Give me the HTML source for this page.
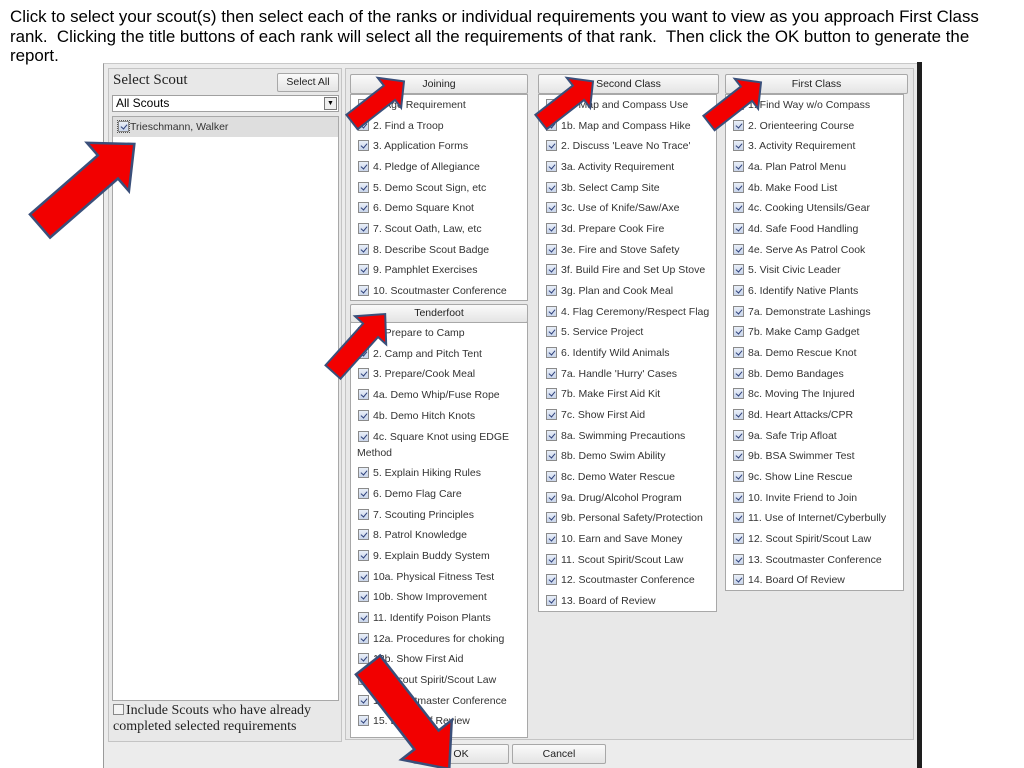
<!DOCTYPE html>
<html><head><meta charset="utf-8"><style>
*{margin:0;padding:0;box-sizing:border-box}
body{width:1024px;height:768px;background:#fff;position:relative;overflow:hidden;font-family:"Liberation Sans",Arial,sans-serif}
.intro{position:absolute;left:10px;top:7px;width:995px;font-size:16.9px;line-height:19.7px;color:#000}
.win{position:absolute;left:103px;top:63px;width:815px;height:705px;background:#ececec;border-left:1px solid #9a9a9a;border-top:1px solid #c8c8c8}
.rbar{position:absolute;left:917px;top:62px;width:5px;height:706px;background:#1e1e1e}
.lp{position:absolute;left:108px;top:68px;width:234px;height:674px;border:1px solid #c4c4c4;background:#e8e8e8}
.rp{position:absolute;left:345px;top:68px;width:569px;height:672px;border:1px solid #c4c4c4;background:#e8e8e8}
.btn{position:absolute;border:1px solid #a8a8a8;border-radius:2px;background:linear-gradient(#fafafa,#e4e4e4);font-size:10.5px;text-align:center;color:#222}
.list{position:absolute;background:#fff;border:1px solid #a8a8a8}
.row{height:20.68px;line-height:20.68px;font-size:10.5px;color:#333;padding-left:7px;white-space:nowrap}
.row.w{height:37px;line-height:16px;padding-top:3px;white-space:normal;padding-left:6px}
.cb{display:inline-block;width:11px;height:11px;border:1px solid #8a8a8a;background:linear-gradient(#e8eef8,#c9d5ea);vertical-align:-2px;margin-right:4px;position:relative}
.cb:after{content:"";position:absolute;left:3px;top:1px;width:3px;height:5px;border-right:1.5px solid #2c3f7a;border-bottom:1.5px solid #2c3f7a;transform:rotate(40deg)}
.serif{font-family:"Liberation Serif",serif}
</style></head><body>
<div class="intro">Click to select your scout(s) then select each of the ranks or individual requirements you want to view as you approach First Class rank.&nbsp; Clicking the title buttons of each rank will select all the requirements of that rank.&nbsp; Then click the OK button to generate the report.</div>
<div class="win"></div>
<div class="rbar"></div>
<div class="lp">
  <div class="serif" style="position:absolute;left:4px;top:3px;font-size:15px;color:#222">Select Scout</div>
  <div class="btn" style="left:168px;top:4px;width:62px;height:19px;line-height:17px">Select All</div>
  <div style="position:absolute;left:3px;top:26px;width:227px;height:17px;background:#fff;border:1px solid #a0a0a0;font-size:12px;line-height:15px;padding-left:3px">All Scouts
    <div style="position:absolute;right:1px;top:1px;width:13px;height:13px;border:1px solid #777;background:#eee;font-size:7px;line-height:12px;text-align:center">▼</div></div>
  <div style="position:absolute;left:3px;top:47px;width:227px;height:585px;background:#fff;border:1px solid #a8a8a8">
    <div style="height:20px;background:#dedede;font-size:10.5px;line-height:20px;padding-left:5px;color:#333"><span class="cb" style="margin-right:1px;outline:1px dotted #555"></span>Trieschmann, Walker</div>
  </div>
  <div class="serif" style="position:absolute;left:4px;top:634px;font-size:14px;line-height:16px;color:#222"><span style="display:inline-block;width:11px;height:11px;border:1px solid #888;background:#f4f4f4;vertical-align:-1px;margin-right:2px"></span>Include Scouts who have already<br>completed selected requirements</div>
</div>
<div class="rp"></div>

<div class="btn" style="left:350px;top:74px;width:178px;height:20px;line-height:19px">Joining</div>
<div class="list" style="left:350px;top:94px;width:178px;height:207px">
<div class="row"><span class="cb"></span>1. Age Requirement</div>
<div class="row"><span class="cb"></span>2. Find a Troop</div>
<div class="row"><span class="cb"></span>3. Application Forms</div>
<div class="row"><span class="cb"></span>4. Pledge of Allegiance</div>
<div class="row"><span class="cb"></span>5. Demo Scout Sign, etc</div>
<div class="row"><span class="cb"></span>6. Demo Square Knot</div>
<div class="row"><span class="cb"></span>7. Scout Oath, Law, etc</div>
<div class="row"><span class="cb"></span>8. Describe Scout Badge</div>
<div class="row"><span class="cb"></span>9. Pamphlet Exercises</div>
<div class="row"><span class="cb"></span>10. Scoutmaster Conference</div>
</div>

<div class="btn" style="left:350px;top:304px;width:178px;height:19px;line-height:17px">Tenderfoot</div>
<div class="list" style="left:350px;top:322px;width:178px;height:416px">
<div class="row"><span class="cb"></span>1. Prepare to Camp</div>
<div class="row"><span class="cb"></span>2. Camp and Pitch Tent</div>
<div class="row"><span class="cb"></span>3. Prepare/Cook Meal</div>
<div class="row"><span class="cb"></span>4a. Demo Whip/Fuse Rope</div>
<div class="row"><span class="cb"></span>4b. Demo Hitch Knots</div>
<div class="row w"><span class="cb" style="margin-left:1px"></span>4c. Square Knot using EDGE Method</div>
<div class="row"><span class="cb"></span>5. Explain Hiking Rules</div>
<div class="row"><span class="cb"></span>6. Demo Flag Care</div>
<div class="row"><span class="cb"></span>7. Scouting Principles</div>
<div class="row"><span class="cb"></span>8. Patrol Knowledge</div>
<div class="row"><span class="cb"></span>9. Explain Buddy System</div>
<div class="row"><span class="cb"></span>10a. Physical Fitness Test</div>
<div class="row"><span class="cb"></span>10b. Show Improvement</div>
<div class="row"><span class="cb"></span>11. Identify Poison Plants</div>
<div class="row"><span class="cb"></span>12a. Procedures for choking</div>
<div class="row"><span class="cb"></span>12b. Show First Aid</div>
<div class="row"><span class="cb"></span>13. Scout Spirit/Scout Law</div>
<div class="row"><span class="cb"></span>14. Scoutmaster Conference</div>
<div class="row"><span class="cb"></span>15. Board Of Review</div>
</div>

<div class="btn" style="left:538px;top:74px;width:181px;height:20px;line-height:19px">Second Class</div>
<div class="list" style="left:538px;top:94px;width:179px;height:518px">
<div class="row"><span class="cb"></span>1a. Map and Compass Use</div>
<div class="row"><span class="cb"></span>1b. Map and Compass Hike</div>
<div class="row"><span class="cb"></span>2. Discuss 'Leave No Trace'</div>
<div class="row"><span class="cb"></span>3a. Activity Requirement</div>
<div class="row"><span class="cb"></span>3b. Select Camp Site</div>
<div class="row"><span class="cb"></span>3c. Use of Knife/Saw/Axe</div>
<div class="row"><span class="cb"></span>3d. Prepare Cook Fire</div>
<div class="row"><span class="cb"></span>3e. Fire and Stove Safety</div>
<div class="row"><span class="cb"></span>3f. Build Fire and Set Up Stove</div>
<div class="row"><span class="cb"></span>3g. Plan and Cook Meal</div>
<div class="row"><span class="cb"></span>4. Flag Ceremony/Respect Flag</div>
<div class="row"><span class="cb"></span>5. Service Project</div>
<div class="row"><span class="cb"></span>6. Identify Wild Animals</div>
<div class="row"><span class="cb"></span>7a. Handle 'Hurry' Cases</div>
<div class="row"><span class="cb"></span>7b. Make First Aid Kit</div>
<div class="row"><span class="cb"></span>7c. Show First Aid</div>
<div class="row"><span class="cb"></span>8a. Swimming Precautions</div>
<div class="row"><span class="cb"></span>8b. Demo Swim Ability</div>
<div class="row"><span class="cb"></span>8c. Demo Water Rescue</div>
<div class="row"><span class="cb"></span>9a. Drug/Alcohol Program</div>
<div class="row"><span class="cb"></span>9b. Personal Safety/Protection</div>
<div class="row"><span class="cb"></span>10. Earn and Save Money</div>
<div class="row"><span class="cb"></span>11. Scout Spirit/Scout Law</div>
<div class="row"><span class="cb"></span>12. Scoutmaster Conference</div>
<div class="row"><span class="cb"></span>13. Board of Review</div>
</div>

<div class="btn" style="left:725px;top:74px;width:183px;height:20px;line-height:19px">First Class</div>
<div class="list" style="left:725px;top:94px;width:179px;height:497px">
<div class="row"><span class="cb"></span>1. Find Way w/o Compass</div>
<div class="row"><span class="cb"></span>2. Orienteering Course</div>
<div class="row"><span class="cb"></span>3. Activity Requirement</div>
<div class="row"><span class="cb"></span>4a. Plan Patrol Menu</div>
<div class="row"><span class="cb"></span>4b. Make Food List</div>
<div class="row"><span class="cb"></span>4c. Cooking Utensils/Gear</div>
<div class="row"><span class="cb"></span>4d. Safe Food Handling</div>
<div class="row"><span class="cb"></span>4e. Serve As Patrol Cook</div>
<div class="row"><span class="cb"></span>5. Visit Civic Leader</div>
<div class="row"><span class="cb"></span>6. Identify Native Plants</div>
<div class="row"><span class="cb"></span>7a. Demonstrate Lashings</div>
<div class="row"><span class="cb"></span>7b. Make Camp Gadget</div>
<div class="row"><span class="cb"></span>8a. Demo Rescue Knot</div>
<div class="row"><span class="cb"></span>8b. Demo Bandages</div>
<div class="row"><span class="cb"></span>8c. Moving The Injured</div>
<div class="row"><span class="cb"></span>8d. Heart Attacks/CPR</div>
<div class="row"><span class="cb"></span>9a. Safe Trip Afloat</div>
<div class="row"><span class="cb"></span>9b. BSA Swimmer Test</div>
<div class="row"><span class="cb"></span>9c. Show Line Rescue</div>
<div class="row"><span class="cb"></span>10. Invite Friend to Join</div>
<div class="row"><span class="cb"></span>11. Use of Internet/Cyberbully</div>
<div class="row"><span class="cb"></span>12. Scout Spirit/Scout Law</div>
<div class="row"><span class="cb"></span>13. Scoutmaster Conference</div>
<div class="row"><span class="cb"></span>14. Board Of Review</div>
</div>

<div class="btn" style="left:413px;top:744px;width:96px;height:20px;line-height:18px">OK</div>
<div class="btn" style="left:512px;top:744px;width:94px;height:20px;line-height:18px">Cancel</div>

<svg width="1024" height="768" style="position:absolute;left:0;top:0" viewBox="0 0 1024 768">
<g fill="#f20000" stroke="#3a4f7a" stroke-linejoin="miter">
<polygon transform="translate(40,226) rotate(-41) scale(125,64)" points="0,-0.24 0.72,-0.24 0.72,-0.5 1,0 0.72,0.5 0.72,0.24 0,0.24" vector-effect="non-scaling-stroke" style="stroke-width:2.5px"/>
<polygon transform="translate(352,122) rotate(-38) scale(66,38)" points="0,-0.24 0.72,-0.24 0.72,-0.5 1,0 0.72,0.5 0.72,0.24 0,0.24" vector-effect="non-scaling-stroke" style="stroke-width:2px"/>
<polygon transform="translate(541,122) rotate(-38) scale(66,38)" points="0,-0.24 0.72,-0.24 0.72,-0.5 1,0 0.72,0.5 0.72,0.24 0,0.24" vector-effect="non-scaling-stroke" style="stroke-width:2px"/>
<polygon transform="translate(709,123) rotate(-38) scale(66,38)" points="0,-0.24 0.72,-0.24 0.72,-0.5 1,0 0.72,0.5 0.72,0.24 0,0.24" vector-effect="non-scaling-stroke" style="stroke-width:2px"/>
<polygon transform="translate(333,372) rotate(-48) scale(78,42)" points="0,-0.24 0.72,-0.24 0.72,-0.5 1,0 0.72,0.5 0.72,0.24 0,0.24" vector-effect="non-scaling-stroke" style="stroke-width:2px"/>
<polygon transform="translate(368,665) rotate(52) scale(132,64)" points="0,-0.24 0.72,-0.24 0.72,-0.5 1,0 0.72,0.5 0.72,0.24 0,0.24" vector-effect="non-scaling-stroke" style="stroke-width:2.5px"/>
</g>
</svg>
</body></html>
